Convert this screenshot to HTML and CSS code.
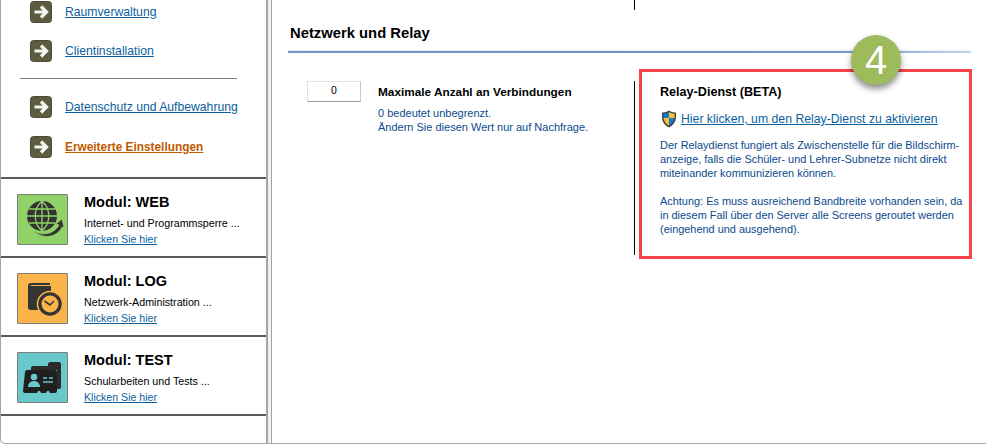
FILE: index.html
```html
<!DOCTYPE html>
<html lang="de">
<head>
<meta charset="utf-8">
<title>Netzwerk und Relay</title>
<link rel="stylesheet" href="styles.css">
</head>
<body>
<div class="page">
  <aside class="sidebar">
    <nav class="nav">
      <div class="nav-group">
        <div class="nav-row"><svg class="arrow" viewBox="0 0 22 22"><rect x=".5" y=".5" width="21" height="21" rx="3" fill="#5c5c41" stroke="#4c4c36"/><path d="M4.5 11H16M11 5.5l5.5 5.500L11 16.500" fill="none" stroke="#f4f7f0" stroke-width="3.200"/></svg><a href="#">Raumverwaltung</a></div>
        <div class="nav-row"><svg class="arrow" viewBox="0 0 22 22"><rect x=".5" y=".5" width="21" height="21" rx="3" fill="#5c5c41" stroke="#4c4c36"/><path d="M4.5 11H16M11 5.5l5.5 5.500L11 16.500" fill="none" stroke="#f4f7f0" stroke-width="3.200"/></svg><a href="#">Clientinstallation</a></div>
      </div>
      <hr class="nav-rule">
      <div class="nav-group nav-group-wide">
        <div class="nav-row"><svg class="arrow" viewBox="0 0 22 22"><rect x=".5" y=".5" width="21" height="21" rx="3" fill="#5c5c41" stroke="#4c4c36"/><path d="M4.5 11H16M11 5.5l5.5 5.500L11 16.500" fill="none" stroke="#f4f7f0" stroke-width="3.200"/></svg><a href="#">Datenschutz und Aufbewahrung</a></div>
        <div class="nav-row"><svg class="arrow" viewBox="0 0 22 22"><rect x=".5" y=".5" width="21" height="21" rx="3" fill="#5c5c41" stroke="#4c4c36"/><path d="M4.5 11H16M11 5.5l5.5 5.500L11 16.500" fill="none" stroke="#f4f7f0" stroke-width="3.200"/></svg><a href="#" class="active">Erweiterte Einstellungen</a></div>
      </div>
    </nav>

    <section class="module">
      <div class="module-icon web">
        <svg viewBox="0 0 51 51" width="51" height="51">
          <circle cx="25" cy="22" r="15" fill="#333"/>
          <path d="M10 22h30M12 15h26M12 29h26M25 7v30M25 7c-9 8-9 22 0 30M25 7c9 8 9 22 0 30" fill="none" stroke="#8fd267" stroke-width="1.300"/>
          <path d="M16 36c9 7 21 4 26-5l-3-1 6-5 2 9-2-1c-5 11-20 13-29 3z" fill="#333" stroke="#8fd267" stroke-width=".8"/>
        </svg>
      </div>
      <div class="module-text">
        <h3>Modul: WEB</h3>
        <p>Internet- und Programmsperre ...</p>
        <a href="#">Klicken Sie hier</a>
      </div>
    </section>
    <section class="module">
      <div class="module-icon log">
        <svg viewBox="0 0 51 51" width="51" height="51">
          <path d="M11 13c0-2 1-3 3-3h19v2H14v1h20v24H14c-2 0-3-1-3-3z" fill="#353535"/>
          <circle cx="33" cy="31" r="12.500" fill="#353535" stroke="#fbb44a" stroke-width="1.500"/>
          <circle cx="33" cy="31" r="8.500" fill="#fbb44a"/>
          <path d="M27.500 28l5.500 4 4-4" fill="none" stroke="#353535" stroke-width="1.600"/>
        </svg>
      </div>
      <div class="module-text">
        <h3>Modul: LOG</h3>
        <p>Netzwerk-Administration ...</p>
        <a href="#">Klicken Sie hier</a>
      </div>
    </section>
    <section class="module">
      <div class="module-icon test">
        <svg viewBox="0 0 51 51" width="51" height="51">
          <path d="M14 16c0-1 1-2 2-2h15v-2c0-1 1-2 2-2h9c1 0 2 1 2 2v23c0 1-1 2-2 2h-2V18H14z" fill="#2b2b2b"/>
          <path d="M8 20c0-1 1-2 2-2h28c1 0 2 1 2 2v19c0 1-1 2-2 2h-5c-1-3-3-3-4 0h-5c-1-3-3-3-4 0h-12c-1 0-2-1-2-2z" fill="#1f1f1f"/>
          <circle cx="17" cy="25" r="3.200" fill="#68c8ca"/>
          <path d="M11 35c0-4 3-6 6-6s6 2 6 6z" fill="#68c8ca"/>
          <path d="M26 26h4M32 26h4M26 30h10" stroke="#68c8ca" stroke-width="1.400"/>
        </svg>
      </div>
      <div class="module-text">
        <h3>Modul: TEST</h3>
        <p>Schularbeiten und Tests ...</p>
        <a href="#">Klicken Sie hier</a>
      </div>
    </section>
  </aside>

  <main class="content">
    <h2 class="section-title">Netzwerk und Relay</h2>
    <div class="settings">
      <div class="setting">
        <input class="count" type="text" value="0" aria-label="Maximale Anzahl an Verbindungen">
        <div class="setting-text">
          <h4>Maximale Anzahl an Verbindungen</h4>
          <p>0 bedeutet unbegrenzt.<br>Ändern Sie diesen Wert nur auf Nachfrage.</p>
        </div>
      </div>
      <div class="relay">
        <h4>Relay-Dienst (BETA)</h4>
        <div class="relay-link">
          <svg class="shield" viewBox="0 0 16 18">
            <path d="M8 .5c2 1.500 4.500 2 7 2 0 6 .5 11-7 15C.5 13.500 1 8.500 1 2.500c2.500 0 5-.5 7-2z" fill="#3a3f46"/>
            <path d="M8 2c-1.700 1-3.700 1.500-5.700 1.700 0 1.500 0 3 .2 4.300H8z" fill="#1877d0"/>
            <path d="M8 2v6h5.500c.2-1.300.2-2.800.2-4.300C11.700 3.500 9.700 3 8 2z" fill="#f8c22c"/>
            <path d="M2.500 8C3 11 4.500 13.600 8 15.800V8z" fill="#f8c22c"/>
            <path d="M8 8v7.800C11.500 13.600 13 11 13.500 8z" fill="#1877d0"/>
          </svg>
          <a href="#">Hier klicken, um den Relay-Dienst zu aktivieren</a>
        </div>
        <p>Der Relaydienst fungiert als Zwischenstelle für die Bildschirm-<br>anzeige, falls die Schüler- und Lehrer-Subnetze nicht direkt<br>miteinander kommunizieren können.</p>
        <p>Achtung: Es muss ausreichend Bandbreite vorhanden sein, da<br>in diesem Fall über den Server alle Screens geroutet werden<br>(eingehend und ausgehend).</p>
      </div>
    </div>
    <div class="highlight"></div>
    <div class="badge">4</div>
  </main>
</div>
</body>
</html>
```
FILE: styles.css
```css
* { box-sizing: border-box; }
html, body { margin: 0; height: 444px; overflow: hidden; background: #fff; }
body { font-family: "Liberation Sans", Arial, sans-serif; color: #000; }
a { color: #0b5f9e; }

.page {
  display: flex;
  height: 444px;
  background: #f2f2f2;
  border-bottom: 1px solid #a8a8a8;
  border-left: 1px solid #a8a8a8;
  border-bottom-left-radius: 5px;
}

.sidebar {
  flex: 0 0 267px;
  height: 443px;
  background: #fff;
  border-right: 2px solid #a5a5a5;
  border-bottom-left-radius: 5px;
  display: flex;
  flex-direction: column;
}

.nav { padding: 0 0 0 29px; height: 177px; flex: none; }
.nav-group { display: flex; flex-direction: column; gap: 17px; padding-top: 1px; }
.nav-group-wide { gap: 18px; }
.nav-row { display: flex; align-items: center; gap: 13px; height: 22px; font-size: 12.200px; white-space: nowrap; }
.nav-row a.active { color: #bf5a00; font-weight: bold; font-size: 11.850px; }
.arrow { width: 22px; height: 22px; flex: none; }
.nav-rule { margin: 16px 0 16px -10px; width: 217px; height: 1px; border: 0; background: #808080; }

.module {
  flex: none;
  height: 79px;
  border-top: 2px solid #5a5a5a;
  display: flex;
  padding: 15px 0 0 16px;
  gap: 16px;
}
.module:last-child { height: 81px; border-bottom: 2px solid #5a5a5a; }
.module-icon { width: 51px; height: 51px; flex: none; border: 1px solid #7d7d7d; overflow: hidden; border-radius: 1px; }
.module-icon svg { display: block; margin: -1px; }
.web { background: #90d267; }
.log { background: #fbb44a; }
.test { background: #68c8ca; }
.module-text h3 { margin: -1px 0 0; font-size: 14.500px; line-height: 18px; font-weight: bold; }
.module-text p { margin: 6px 0 0; font-size: 10.700px; line-height: 12px; white-space: nowrap; }
.module-text a { display: block; margin-top: 4px; font-size: 10.600px; line-height: 12px; }

.content {
  position: relative;
  flex: 1;
  height: 443px;
  margin-left: 3px;
  background: #fff;
  border-left: 1px solid #a5a5a5;
  padding: 0 15px 0 16px;
}
.content::before {
  content: "";
  position: absolute;
  left: 362px;
  top: 0;
  width: 1px;
  height: 10px;
  background: #000;
}
.section-title {
  margin: 0;
  padding: 25px 0 8px 2px;
  font-size: 14.800px;
  line-height: 17px;
  font-weight: bold;
  height: 53px;
  background:
    linear-gradient(90deg, #7197c8 0, #7197c8 80%, #c6d6ea 100%) 0 100% / 100% 2px no-repeat,
    linear-gradient(90deg, #dfe7f2, #eef3f8) 0 calc(100% - 2px) / 100% 1px no-repeat;
}
.settings { display: flex; padding: 28px 0 0 19px; }
.setting { display: flex; gap: 17px; flex: 0 0 327px; }
.count {
  width: 54px;
  height: 21px;
  flex: none;
  border: 1px solid #e2e2e2;
  border-bottom: 1px solid #9a9a9a;
  border-right: 1px solid #c8c8c8;
  text-align: center;
  font: 10.500px "Liberation Sans", Arial, sans-serif;
  color: #000;
  padding: 0 0 3px;
  background: #fff;
}
.setting-text h4, .relay h4 { margin: 0; line-height: 15px; font-weight: bold; white-space: nowrap; }
.setting-text h4 { margin-top: 4px; font-size: 11.800px; }
.setting-text p { margin: 6px 0 0; font-size: 11px; line-height: 14px; color: #0b4a8c; white-space: nowrap; }
.relay { height: 174px; width: 300px; border-left: 1px solid #000; padding: 4px 0 0 25px; flex: none; }
.relay h4 { font-size: 12.600px; }
.relay-link { display: flex; align-items: center; gap: 4px; margin: 10px 0 0 1px; height: 18px; font-size: 12.250px; white-space: nowrap; }
.relay-link a { color: #0b5f9e; }
.shield { width: 16px; height: 18px; flex: none; }
.relay p { margin: 10px 0 0; font-size: 10.930px; line-height: 14px; color: #0b4a8c; white-space: nowrap; }
.relay p + p { margin-top: 14px; }

.highlight {
  position: absolute;
  left: 367px;
  top: 69px;
  width: 333px;
  height: 190px;
  border: 3px solid #f5434a;
}
.badge {
  position: absolute;
  left: 579px;
  top: 35px;
  width: 50px;
  height: 50px;
  border-radius: 50%;
  background: #9dbb5b;
  color: #fff;
  font-size: 40px;
  line-height: 50px;
  text-align: center;
  box-shadow: 0 4px 6px rgba(0, 0, 0, .45);
}
```
